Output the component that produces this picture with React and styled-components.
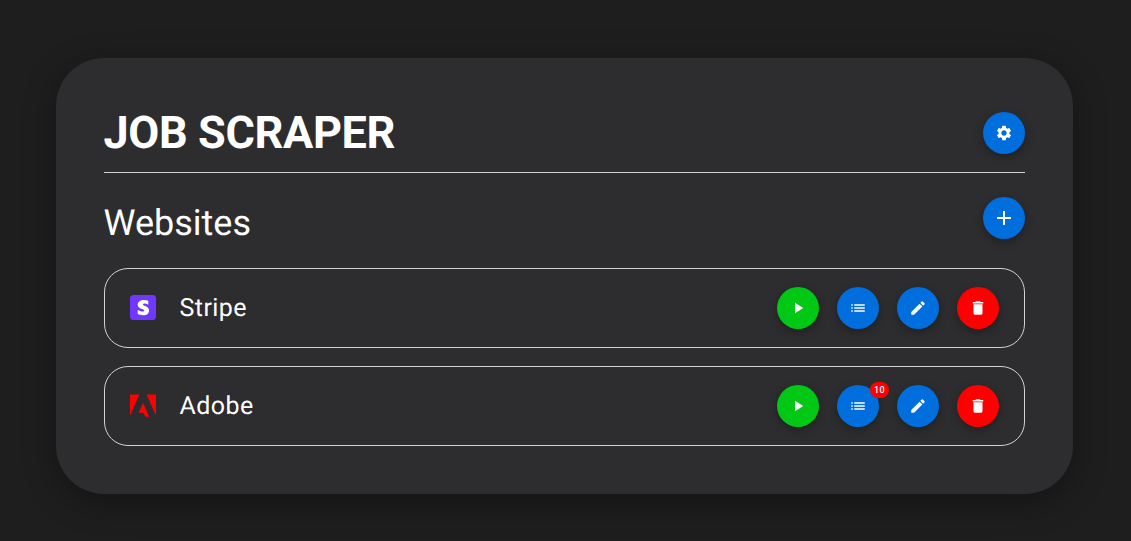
import React from "react";
import styled, { createGlobalStyle } from "styled-components";
import { MdSettings, MdAdd, MdPlayArrow, MdList, MdEdit, MdDelete } from "react-icons/md";

const GlobalStyle = createGlobalStyle`
  * { box-sizing: border-box; }
  body {
    margin: 0;
    min-height: 100vh;
    overflow: hidden;
    background: #1e1e1e;
    color: #fff;
    font-family: Roboto, sans-serif;
    text-rendering: geometricPrecision;
  }
`;

const Page = styled.main`
  padding: 58px 58px 47px 56px;
`;

const Card = styled.section`
  height: 436px;
  padding: 48px;
  border-radius: 48px;
  background: #2d2d2f;
  box-shadow: 0 8px 32px rgba(0, 0, 0, 0.35);
`;

const Header = styled.header`
  display: flex;
  justify-content: space-between;
  align-items: center;
  height: 67px;
  padding-bottom: 12px;
  margin-bottom: 24px;
  border-bottom: 1px solid #d2d2d2;
`;

const Title = styled.h1`
  margin: 0 0 0 -0.5px;
  font-size: 45px;
  line-height: 54px;
  font-weight: 700;
  letter-spacing: -0.36px;
  white-space: nowrap;
`;

const SectionHeader = styled.div`
  display: flex;
  justify-content: space-between;
  align-items: flex-start;
  height: 71px;
`;

const SectionTitle = styled.h2`
  margin: 5px 0 0 -0.5px;
  font-size: 36px;
  line-height: 42px;
  font-weight: 400;
`;

const SiteList = styled.ul`
  display: grid;
  gap: 18px;
  margin: 0;
  padding: 0;
  list-style: none;
`;

const SiteRow = styled.li`
  display: flex;
  align-items: center;
  height: 80px;
  padding: 0 25px;
  border: 1px solid #d2d2d2;
  border-radius: 24px;
`;

const Logo = styled.svg`
  flex: none;
  width: 26px;
  height: 26px;
  margin-right: 23.5px;
`;

const SiteName = styled.span`
  flex: 1;
  padding-top: 2px;
  font-size: 25px;
  line-height: 32px;
  letter-spacing: 0.45px;
`;

const Actions = styled.div`
  display: flex;
  gap: 18px;
`;

const colors = { blue: "#006edc", green: "#00c814", red: "#ff0000" };

const RoundButton = styled.button`
  position: relative;
  display: flex;
  align-items: center;
  justify-content: center;
  flex: none;
  width: 42px;
  height: 42px;
  padding: 0;
  border: 0;
  border-radius: 50%;
  color: #fff;
  background: ${({ $tone }) => colors[$tone]};
  box-shadow: 0 3px 10px rgba(0, 0, 0, 0.3);
  font-size: ${({ $size }) => $size || 18}px;
`;

const Badge = styled.span`
  position: absolute;
  top: -3px;
  right: -10px;
  display: flex;
  align-items: center;
  justify-content: center;
  width: 19px;
  height: 16px;
  border-radius: 8px;
  background: #ff0000;
  font: 500 9px/16px Roboto, sans-serif;
  letter-spacing: 0.3px;
`;

const StripeLogo = () => (
  <Logo viewBox="0 0 26 26">
    <rect width="26" height="25" rx="3.5" fill="#7038ff" />
    <path
      fill="#fff"
      d="M18.3 5.8v3.9c-1.3-.7-2.7-1.1-3.8-1.1-.9 0-1.5.3-1.5.9 0 2 6 1 6 5.9 0 3.2-2.4 4.9-6 4.9-1.6 0-3.6-.4-5.3-1.2v-4c1.6.9 3.5 1.5 5 1.5 1 0 1.6-.3 1.6-1 0-2.1-6.6-1.3-6.6-5.9 0-3.1 2.9-4.8 6.2-4.8 1.5 0 2.9.2 4.4.9z"
    />
  </Logo>
);

const AdobeLogo = () => (
  <Logo viewBox="0 0 26 26">
    <path fill="#ff0000" d="M0 1.6h9.4L0 22.8zM16.6 1.6H26v21.2zM13 9.7l6.2 14h-3.9l-1.9-4H8.7z" />
  </Logo>
);

const sites = [
  { name: "Stripe", logo: StripeLogo },
  { name: "Adobe", logo: AdobeLogo, count: 10 },
];

function Site({ name, logo: SiteLogo, count }) {
  return (
    <SiteRow>
      <SiteLogo />
      <SiteName>{name}</SiteName>
      <Actions>
        <RoundButton $tone="green" aria-label={`Run ${name}`}><MdPlayArrow /></RoundButton>
        <RoundButton $tone="blue" aria-label={`${name} jobs`}>
          <MdList />
          {count && <Badge>{count}</Badge>}
        </RoundButton>
        <RoundButton $tone="blue" aria-label={`Edit ${name}`}><MdEdit /></RoundButton>
        <RoundButton $tone="red" aria-label={`Delete ${name}`}><MdDelete /></RoundButton>
      </Actions>
    </SiteRow>
  );
}

export default function App() {
  return (
    <>
      <GlobalStyle />
      <Page>
        <Card>
          <Header>
            <Title>JOB SCRAPER</Title>
            <RoundButton $tone="blue" aria-label="Settings"><MdSettings /></RoundButton>
          </Header>
          <SectionHeader>
            <SectionTitle>Websites</SectionTitle>
            <RoundButton $tone="blue" $size={24} aria-label="Add website"><MdAdd /></RoundButton>
          </SectionHeader>
          <SiteList>
            {sites.map((site) => <Site key={site.name} {...site} />)}
          </SiteList>
        </Card>
      </Page>
    </>
  );
}
